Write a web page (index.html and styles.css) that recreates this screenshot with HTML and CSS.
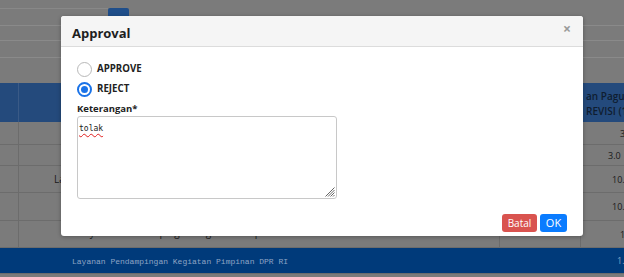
FILE: index.html
```html
<!DOCTYPE html>
<html>
<head>
<meta charset="utf-8">
<link rel="stylesheet" href="styles.css">
</head>
<body>
<div class="page">
  <div class="top">
    <div class="search-row">
      <div class="search-box"></div>
      <div class="search-btn"></div>
    </div>
    <div class="filter-line l1"></div>
    <div class="filter-line l2"></div>
  </div>
  <div class="table">
    <div class="row head">
      <div class="cell c1"></div>
      <div class="cell c2"></div>
      <div class="cell c3"></div>
      <div class="cell c4 head-text">an Pagu<br>REVISI (1</div>
    </div>
    <div class="row r1">
      <div class="cell c1"></div><div class="cell c2"></div><div class="cell c3"></div>
      <div class="cell c4 num n-short">3</div>
    </div>
    <div class="row r2">
      <div class="cell c1"></div><div class="cell c2"></div><div class="cell c3"></div>
      <div class="cell c4 num n-mid">3.0</div>
    </div>
    <div class="row r3">
      <div class="cell c1"></div><div class="cell c2 name">La</div><div class="cell c3"></div>
      <div class="cell c4 num n-long">10.3</div>
    </div>
    <div class="row r4">
      <div class="cell c1"></div><div class="cell c2"></div><div class="cell c3"></div>
      <div class="cell c4 num n-long">10.3</div>
    </div>
    <div class="row r5">
      <div class="cell c1"></div><div class="cell c2 under">Layanan Pendampingan Kegiatan Pimpinan DPR RI</div><div class="cell c3"></div>
      <div class="cell c4 num n-short">1</div>
    </div>
    <div class="row total">
      <div class="cell c1"></div>
      <div class="cell c2 total-text">Layanan Pendampingan Kegiatan Pimpinan DPR RI</div>
      <div class="cell c3"></div>
      <div class="cell c4 num n-total">1.0</div>
    </div>
  </div>
</div>

<div class="modal">
  <div class="modal-header">
    <div class="modal-title">Approval</div>
    <div class="modal-close">×</div>
  </div>
  <div class="modal-body">
    <label class="radio-row">
      <span class="radio"></span>
      <span class="radio-label">APPROVE</span>
    </label>
    <label class="radio-row">
      <span class="radio checked"></span>
      <span class="radio-label">REJECT</span>
    </label>
    <div class="field-label">Keterangan*</div>
    <div class="textarea">
      <span class="typed">tolak</span>
      <svg class="grip" width="11" height="11" viewBox="0 0 11 11">
        <path d="M10.5 1.5 L1.5 10.5 M10.5 4 L4 10.5 M10.5 6.5 L6.5 10.5 M10.5 9 L9 10.5" stroke="#666" stroke-width="1" fill="none"/>
      </svg>
    </div>
  </div>
  <div class="modal-footer">
    <button class="btn btn-red">Batal</button>
    <button class="btn btn-blue">OK</button>
  </div>
</div>
</body>
</html>
```

FILE: styles.css
```css
html, body {
  margin: 0;
  padding: 0;
  width: 624px;
  height: 277px;
  overflow: hidden;
  background: #7b7b7b;
  font-family: "Open Sans", "Noto Sans", sans-serif;
}

.page {
  width: 624px;
  height: 277px;
  overflow: hidden;
}

.top {
  height: 83px;
  box-sizing: border-box;
  padding-top: 8px;
}

.search-row {
  display: flex;
  height: 18px;
  border-bottom: 1px solid #8a8a8a;
  box-sizing: border-box;
}

.search-box {
  width: 108px;
  border-top: 1px solid #888;
  box-sizing: border-box;
}

.search-btn {
  width: 21px;
  background: #1f4e8a;
  border-radius: 2px 2px 0 0;
}

.filter-line {
  border-bottom: 1px solid #8a8a8a;
}
.filter-line.l1 { height: 14px; }
.filter-line.l2 { height: 16px; }

.table {
  display: flex;
  flex-direction: column;
}

.row {
  display: grid;
  grid-template-columns: 19px 481px 81px 120px;
  border-bottom: 1px solid #6c6c6c;
  box-sizing: border-box;
}

.cell {
  border-right: 1px solid #6c6c6c;
  box-sizing: border-box;
  font-size: 9px;
  color: #1a1a1a;
  display: flex;
  align-items: center;
  white-space: nowrap;
  overflow: hidden;
}

.row.head { height: 39px; background: #244a7c; border-bottom: none; }
.row.head .cell { border-right-color: #3a5a86; }
.row.r1 { height: 23px; }
.row.r2 { height: 21px; }
.row.r3 { height: 27px; }
.row.r4 { height: 28px; }
.row.r5 { height: 27px; }
.row.total { height: 26px; background: #003a7a; border-bottom: 1px solid #6c6c6c; }
.row.total .cell { border-right: none; }

.head-text {
  font-size: 10px;
  font-weight: 600;
  line-height: 15px;
  color: #0f1d30;
  padding-left: 5px;
  padding-top: 2px;
}

.num { font-size: 9px; color: #1a1a1a; }
.n-short { padding-left: 39px; }
.n-mid { padding-left: 27px; }
.n-long { padding-left: 31px; }
.n-total { padding-left: 36px; color: #8aa0c2; }

.name { padding-left: 35px; font-size: 10px; }
.under { padding-left: 60px; font-size: 10px; align-items: flex-start; padding-top: 4px; }

.total-text {
  font-family: "Liberation Mono", "DejaVu Sans Mono", monospace;
  font-size: 8px;
  color: #8ea4c4;
  padding-left: 53px;
  padding-top: 2px;
}

/* modal */
.modal {
  position: absolute;
  left: 61px;
  top: 16px;
  width: 522px;
  height: 220px;
  background: #fff;
  border-radius: 3px;
  box-shadow: 0 1px 4px rgba(0,0,0,0.3);
  display: flex;
  flex-direction: column;
  overflow: hidden;
  color: #212121;
}

.modal-header {
  height: 31px;
  box-sizing: border-box;
  background: #f5f5f5;
  border-bottom: 1px solid #dcdcdc;
  display: flex;
  align-items: center;
  justify-content: space-between;
  padding: 0 12px 0 11px;
}

.modal-title {
  font-size: 13px;
  font-weight: 700;
  color: #1e1e1e;
  padding-top: 3px;
}

.modal-close {
  font-size: 14px;
  font-weight: 700;
  color: #9a9a9a;
  margin-top: -5px;
}

.modal-body {
  flex: 1;
  padding: 15px 16px 0 16px;
  display: flex;
  flex-direction: column;
}

.radio-row {
  display: flex;
  align-items: center;
  gap: 5px;
  height: 15px;
  margin-bottom: 5px;
}

.radio {
  width: 15px;
  height: 15px;
  box-sizing: border-box;
  border-radius: 50%;
  border: 1px solid #b8b8b8;
  background: #fff;
  position: relative;
}

.radio.checked {
  border: 2px solid #1a73e8;
}

.radio.checked::after {
  content: "";
  position: absolute;
  left: 2px;
  top: 2px;
  width: 7px;
  height: 7px;
  border-radius: 50%;
  background: #1a73e8;
}

.radio-label {
  font-size: 9.7px;
  font-weight: 700;
  color: #222;
  padding-bottom: 3px;
}

.field-label {
  font-size: 9.5px;
  font-weight: 700;
  color: #222;
  margin-top: -1px;
  height: 15px;
  line-height: 15px;
}

.textarea {
  width: 260px;
  height: 83px;
  box-sizing: border-box;
  border: 1px solid #c8c8c8;
  border-radius: 3px;
  position: relative;
  padding: 3px 1px;
  line-height: 11px;
}

.typed {
  font-family: "DejaVu Sans Mono", "Liberation Mono", monospace;
  font-size: 8px;
  color: #222;
  text-decoration: underline wavy #e02020;
  text-decoration-thickness: 1px;
  text-underline-offset: 2px;
}

.grip {
  position: absolute;
  right: 1px;
  bottom: 1px;
}

.modal-footer {
  display: flex;
  justify-content: flex-end;
  gap: 3px;
  padding: 0 16px 4px 0;
}

.btn {
  height: 18px;
  border: none;
  border-radius: 3px;
  color: #fff;
  font-family: "Open Sans", "Noto Sans", sans-serif;
  font-size: 10px;
  padding: 0;
  line-height: 18px;
}

.btn-red { width: 35px; background: #d9534f; }
.btn-blue { width: 27px; background: #0a7cff; font-size: 11px; }
```
